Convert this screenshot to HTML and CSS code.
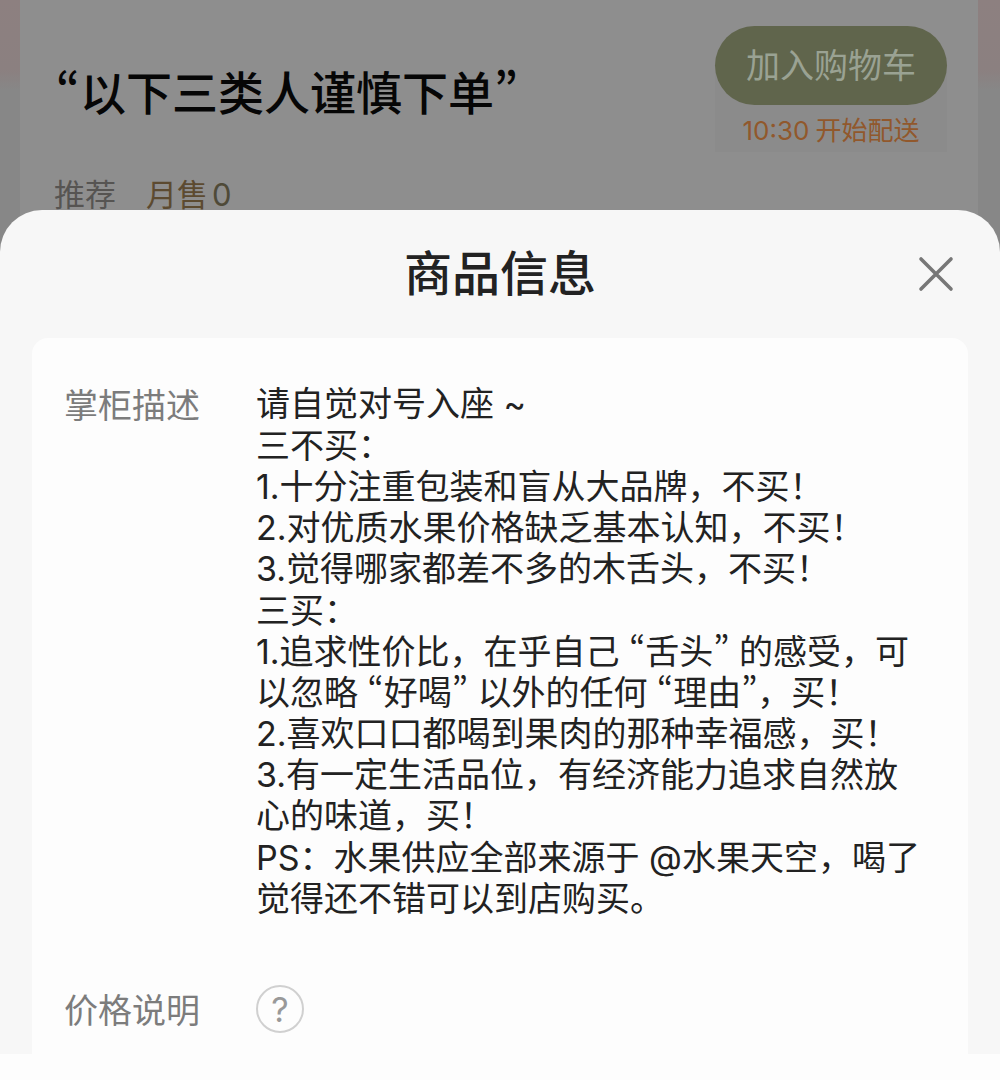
FILE: index.html
```html
<!DOCTYPE html>
<html lang="zh-CN">
<head>
<meta charset="utf-8">
<meta name="viewport" content="width=device-width, initial-scale=1">
<title>商品信息</title>
<link rel="stylesheet" href="styles.css">
</head>
<body>
<main class="page">
  <section class="product">
    <div class="product-card">
      <div class="product-main">
        <h1 class="product-name"><span class="quote">“</span>以下三类人谨慎下单<span class="quote">”</span></h1>
        <p class="product-meta"><span>推荐</span><span class="sales">月售<span class="sales-count">0</span></span></p>
      </div>
      <div class="purchase">
        <button class="add-button" type="button">加入购物车</button>
        <p class="delivery"><span>10:30</span><span>开始配送</span></p>
      </div>
    </div>
  </section>

  <section class="sheet" role="dialog" aria-labelledby="sheet-title">
    <header class="sheet-head">
      <h2 class="sheet-title" id="sheet-title">商品信息</h2>
      <button class="close" type="button" aria-label="关闭">
        <svg width="36" height="36" viewBox="0 0 36 36" fill="none" stroke="currentColor" stroke-width="3.6" stroke-linecap="round"><path d="M3 3L33 33M33 3L3 33"/></svg>
      </button>
    </header>
    <dl class="info">
      <div class="info-row">
        <dt>掌柜描述</dt>
        <dd class="description">
          <p>请自觉对号入座 ~</p>
          <p>三不买：<br>1.十分注重包装和盲从大品牌，不买！<br>2.对优质水果价格缺乏基本认知，不买！<br>3.觉得哪家都差不多的木舌头，不买！</p>
          <p>三买：<br>1.追求性价比，在乎自己 <span class="quote">“</span>舌头<span class="quote">”</span> 的感受，可<br>以忽略 <span class="quote">“</span>好喝<span class="quote">”</span> 以外的任何 <span class="quote">“</span>理由<span class="quote">”</span>，买！<br>2.喜欢口口都喝到果肉的那种幸福感，买！<br>3.有一定生活品位，有经济能力追求自然放<br>心的味道，买！</p>
          <p>PS：水果供应全部来源于 @水果天空，喝了<br>觉得还不错可以到店购买。</p>
        </dd>
      </div>
      <div class="info-row price-row">
        <dt>价格说明</dt>
        <dd><button class="help" type="button" aria-label="价格说明帮助">?</button></dd>
      </div>
    </dl>
  </section>
</main>
</body>
</html>
```
FILE: styles.css
```css
* {
  box-sizing: border-box;
}

body,
h1,
h2,
p,
dl,
dd {
  margin: 0;
}

body {
  background: #fdfdfd;
  color: #222;
  font-family: Inter, "Noto Sans CJK SC", sans-serif;
  font-size: 34px;
  line-height: 41px;
}

button {
  padding: 0;
  border: 0;
  background: none;
  font: inherit;
  cursor: pointer;
}

.quote {
  font-family: "Noto Sans CJK SC", sans-serif;
  font-variant-east-asian: proportional-width;
  line-height: 1;
}

.product {
  padding: 0 22px 0 20px;
  background: linear-gradient(#8d8080 0, #8b8080 70px, #878787 90px);
}

.product-card {
  display: flex;
  justify-content: space-between;
  padding: 26px 31px 37px 34px;
  background: #8e8e8e;
}

.product-main {
  padding-top: 38px;
}

.product-name {
  padding-left: 2px;
  color: #060606;
  font-size: 46px;
  font-weight: 500;
  line-height: 58px;
}

.product-meta {
  display: flex;
  gap: 30px;
  margin-top: 52px;
  color: #565452;
  font-size: 31px;
}

.sales {
  display: flex;
  gap: 4px;
  color: #5c4a30;
}

.sales-count {
  color: #4f4a38;
}

.purchase {
  align-self: flex-start;
  padding-bottom: 4px;
  border-radius: 40px 40px 0 0;
  background: #8b8b8b;
}

.add-button {
  display: block;
  padding: 19px 31px;
  border-radius: 40px;
  background: #60654c;
  color: #9aa293;
}

.delivery {
  display: flex;
  justify-content: center;
  gap: 6px;
  padding-top: 9px;
  color: #91582c;
  font-size: 26px;
  line-height: 34px;
}

.sheet {
  position: relative;
  margin-top: -42px;
  padding: 0 32px;
  border-radius: 42px 42px 0 0;
  background: #f7f7f7;
}

.sheet-head {
  display: grid;
  grid-template-columns: 36px 1fr 36px;
  align-items: center;
  height: 128px;
  padding: 0 14px;
}

.sheet-title {
  grid-column: 2;
  font-size: 48px;
  font-weight: 500;
  line-height: 58px;
  text-align: center;
}

.close {
  display: flex;
  color: #777;
}

.info {
  padding: 45px 32px 21px;
  border-radius: 16px 16px 0 0;
  background: #fdfdfd;
}

.info-row {
  display: grid;
  grid-template-columns: 137px 1fr;
  gap: 55px;
}

dt {
  padding-top: 2px;
  color: #7c7c7c;
}

.description {
  display: grid;
  gap: 1px;
  white-space: nowrap;
}

.price-row {
  align-items: center;
  margin-top: 66px;
}

.help {
  display: grid;
  place-items: center;
  width: 48px;
  height: 48px;
  border: 2px solid #d0d0d0;
  border-radius: 50%;
  color: #999;
}
```
